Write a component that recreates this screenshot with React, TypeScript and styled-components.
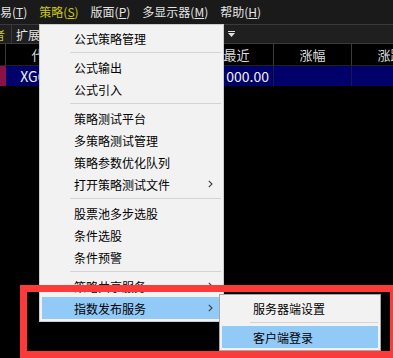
import React from "react";
import styled, { createGlobalStyle } from "styled-components";

const Global = createGlobalStyle`
  html, body { margin: 0; padding: 0; background: #000; }
  body { font-family: "Microsoft YaHei", "Noto Sans CJK SC", "Noto Sans", sans-serif; }
`;

const FONT = `"Microsoft YaHei", "Noto Sans CJK SC", "Noto Sans", sans-serif`;

const Screen = styled.div`
  position: relative;
  width: 393px;
  height: 358px;
  overflow: hidden;
  background: #000;
  font-family: ${FONT};
`;

const MenuBar = styled.div`
  display: flex;
  align-items: center;
  gap: 12px;
  height: 24px;
  background: #1a1a1a;
  font-size: 12px;
  color: #e4e4e4;
  white-space: nowrap;
`;

const BarItem = styled.span<{ $active?: boolean }>`
  color: ${(p) => (p.$active ? "#c9c81c" : "#e4e4e4")};
  line-height: 24px;
`;

const Mn = styled.span`
  text-decoration: underline;
`;

const ToolRow = styled.div`
  display: flex;
  align-items: center;
  height: 18px;
  background: #1f1f1f;
  border-top: 1px solid #3a3a3a;
  border-bottom: 1px solid #3a3a3a;
  font-size: 12px;
  color: #e4e4e4;
`;

const ToolTab = styled.span<{ $hl?: boolean }>`
  display: flex;
  align-items: center;
  height: 100%;
  padding: 0 ${(p) => (p.$hl ? "6px 0 0" : "0 0 2px")};
  color: ${(p) => (p.$hl ? "#c9c81c" : "#e4e4e4")};
  border-right: 1px solid #3a3a3a;
  margin-left: ${(p) => (p.$hl ? "-7px" : "2px")};
`;

const ToolSpacer = styled.div`
  width: 187px;
`;

const FilterIcon = styled.svg`
  width: 7px;
  height: 6px;
`;

const Table = styled.div`
  display: grid;
  grid-template-columns: 6px 78px 116px 74px 78px 78px;
`;

const HeadCell = styled.div`
  height: 21px;
  border-right: 1px solid #3a3a3a;
  border-bottom: 1px solid #202020;
  display: flex;
  align-items: center;
  justify-content: center;
  font-size: 13px;
  color: #dcdcdc;
  white-space: nowrap;
  overflow: hidden;
`;

const RowCell = styled.div<{ $align?: string; $mark?: boolean }>`
  height: 20px;
  background: ${(p) => (p.$mark ? "#8a1247" : "#00006a")};
  border-right: 1px solid ${(p) => (p.$mark ? "#000" : "#1a1a4a")};
  display: flex;
  align-items: center;
  justify-content: ${(p) => p.$align || "center"};
  padding: 0 4px;
  box-sizing: border-box;
  font-size: 14px;
  color: #f0f0f0;
  white-space: nowrap;
  overflow: hidden;
`;

const Menu = styled.div`
  position: absolute;
  left: 39px;
  top: 24px;
  width: 185px;
  box-sizing: border-box;
  background: #f2f2f2;
  border: 1px solid #cdcdcd;
  padding: 2px;
  font-size: 12px;
  color: #000;
`;

const Item = styled.div<{ $hl?: boolean; $pad?: number }>`
  display: flex;
  align-items: center;
  justify-content: space-between;
  height: 22px;
  padding-left: ${(p) => p.$pad ?? 32}px;
  padding-right: 8px;
  background: ${(p) => (p.$hl ? "#91c9f7" : "transparent")};
  white-space: nowrap;
`;

const Sep = styled.div<{ $ml?: number }>`
  height: 7px;
  display: flex;
  align-items: center;
  margin-left: ${(p) => p.$ml ?? 28}px;
  &::after {
    content: "";
    flex: 1;
    height: 1px;
    background: #d4d4d4;
  }
`;

const SubMenu = styled.div`
  position: absolute;
  left: 219px;
  top: 294px;
  width: 162px;
  box-sizing: border-box;
  background: #f2f2f2;
  border: 1px solid #a6a6a6;
  padding: 2px;
  font-size: 12px;
  color: #000;
`;

const Marker = styled.div`
  position: absolute;
  left: 20px;
  top: 285px;
  width: 380px;
  height: 73px;
  box-sizing: border-box;
  border: 7px solid #fc3a3a;
  border-right-width: 10px;
  pointer-events: none;
`;

const Chevron = () => (
  <svg width="5" height="8" viewBox="0 0 5 8">
    <path d="M0.8 0.8 L4 4 L0.8 7.2" fill="none" stroke="#3c3c3c" strokeWidth="1.1" />
  </svg>
);

type Entry = { t: string; sub?: boolean; hl?: boolean } | "sep";

const entries: Entry[] = [
  { t: "公式策略管理" },
  "sep",
  { t: "公式输出" },
  { t: "公式引入" },
  "sep",
  { t: "策略测试平台" },
  { t: "多策略测试管理" },
  { t: "策略参数优化队列" },
  { t: "打开策略测试文件", sub: true },
  "sep",
  { t: "股票池多步选股" },
  { t: "条件选股" },
  { t: "条件预警" },
  "sep",
  { t: "策略共享服务", sub: true },
  { t: "指数发布服务", sub: true, hl: true },
];

export default function App() {
  return (
    <>
      <Global />
      <Screen>
        <MenuBar>
          <BarItem>易(<Mn>T</Mn>)</BarItem>
          <BarItem $active>策略(<Mn>S</Mn>)</BarItem>
          <BarItem>版面(<Mn>P</Mn>)</BarItem>
          <BarItem>多显示器(<Mn>M</Mn>)</BarItem>
          <BarItem>帮助(<Mn>H</Mn>)</BarItem>
        </MenuBar>
        <ToolRow>
          <ToolTab $hl>者</ToolTab>
          <ToolTab>扩展</ToolTab>
          <ToolSpacer />
          <FilterIcon viewBox="0 0 7 6">
            <rect x="0" y="0" width="7" height="1" fill="#e0e0e0" />
            <path d="M0 2 H7 L3.5 6 Z" fill="#e0e0e0" />
          </FilterIcon>
        </ToolRow>
        <Table>
          <HeadCell />
          <HeadCell>代码</HeadCell>
          <HeadCell>名称</HeadCell>
          <HeadCell>最近</HeadCell>
          <HeadCell>涨幅</HeadCell>
          <HeadCell>涨跌</HeadCell>
          <RowCell $mark />
          <RowCell>XG0001</RowCell>
          <RowCell>指数</RowCell>
          <RowCell $align="flex-end">000.00</RowCell>
          <RowCell />
          <RowCell />
        </Table>

        <Menu>
          {entries.map((e, i) =>
            e === "sep" ? (
              <Sep key={i} />
            ) : (
              <Item key={i} $hl={e.hl}>
                <span>{e.t}</span>
                {e.sub && <Chevron />}
              </Item>
            )
          )}
        </Menu>

        <SubMenu>
          <Item $pad={31}>服务器端设置</Item>
          <Sep $ml={28} />
          <Item $pad={31} $hl>客户端登录</Item>
        </SubMenu>

        <Marker />
      </Screen>
    </>
  );
}
